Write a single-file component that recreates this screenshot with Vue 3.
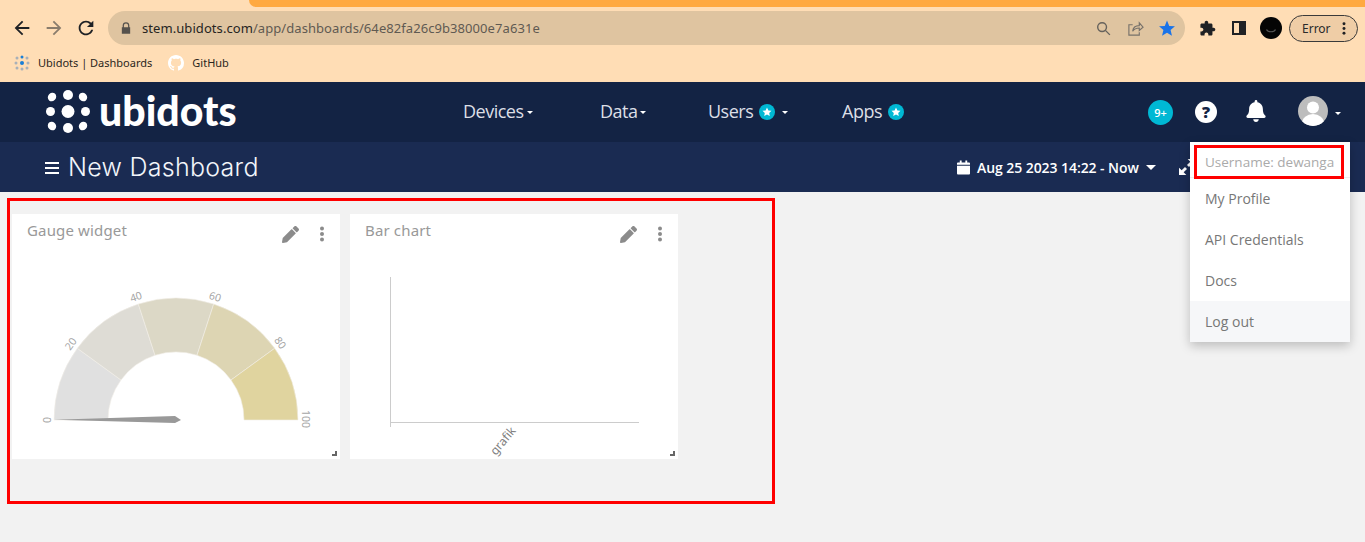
<script setup>
const sectors = [
  { d: 'M54 420A122 122 0 0 1 77.3 348.3L121 380A68 68 0 0 0 108 420Z', fill: '#e0e0e0' },
  { d: 'M77.3 348.3A122 122 0 0 1 138.3 304L155 355.3A68 68 0 0 0 121 380Z', fill: '#dedcd5' },
  { d: 'M138.3 304A122 122 0 0 1 213.7 304L197 355.3A68 68 0 0 0 155 355.3Z', fill: '#dcd8c6' },
  { d: 'M213.7 304A122 122 0 0 1 274.7 348.3L231 380A68 68 0 0 0 197 355.3Z', fill: '#ddd5b3' },
  { d: 'M274.7 348.3A122 122 0 0 1 298 420H244A68 68 0 0 0 231 380Z', fill: '#e0d49f' }
]
const labels = [
  { t: '0', x: 47, y: 420, r: -90 },
  { t: '20', x: 71, y: 344, r: -54 },
  { t: '40', x: 136, y: 297, r: -18 },
  { t: '60', x: 215, y: 297, r: 18 },
  { t: '80', x: 280, y: 343, r: 54 },
  { t: '100', x: 305, y: 419, r: 90 }
]
const menu = ['My Profile', 'API Credentials', 'Docs']
const pencil = 'M497.9 142.1l-46.1 46.1c-4.7 4.7-12.3 4.7-17 0l-111-111c-4.7-4.7-4.7-12.3 0-17l46.1-46.1c18.7-18.7 49.1-18.7 67.9 0l60.1 60.1c18.8 18.7 18.8 49.1 0 67.9zM284.2 99.8L21.6 362.4.4 483.9c-2.9 16.4 11.4 30.6 27.8 27.8l121.5-21.3 262.6-262.6c4.7-4.7 4.7-12.3 0-17l-111-111c-4.8-4.7-12.4-4.7-17.1 0z'
</script>

<template>
  <div class="page">
    <header class="browser">
      <div class="tabstrip"><div class="active-tab"></div></div>
      <div class="toolbar">
        <svg class="tb-icon" viewBox="0 0 24 24" fill="#1f2125"><path d="M20 11H7.83l5.59-5.59L12 4l-8 8 8 8 1.41-1.41L7.83 13H20v-2z"/></svg>
        <svg class="tb-icon fwd" viewBox="0 0 24 24" fill="#8a7c6c"><path d="M4 11h12.17l-5.59-5.59L12 4l8 8-8 8-1.41-1.41L16.17 13H4v-2z"/></svg>
        <svg class="tb-icon reload" viewBox="0 0 24 24" fill="#1f2125"><path d="M17.65 6.35C16.2 4.9 14.21 4 12 4c-4.42 0-7.99 3.58-7.99 8s3.57 8 7.99 8c3.73 0 6.84-2.55 7.73-6h-2.08c-.82 2.33-3.04 4-5.65 4-3.31 0-6-2.69-6-6s2.69-6 6-6c1.66 0 3.14.69 4.22 1.78L13 11h7V4l-2.35 2.35z"/></svg>
        <div class="omnibox">
          <svg class="lock" viewBox="0 0 12 14" fill="#55514c"><path d="M2 6V4a4 4 0 0 1 8 0v2h1v8H1V6Zm1.5 0h5V4a2.5 2.5 0 0 0-5 0Z"/></svg>
          <span class="url"><span class="host">stem.ubidots.com</span>/app/dashboards/64e82fa26c9b38000e7a631e</span>
          <svg class="omni-search" viewBox="0 0 16 16" fill="none" stroke="#66625c" stroke-width="1.5"><circle cx="6.5" cy="6.5" r="4.7"/><path d="M10 10l4.8 4.8"/></svg>
          <svg class="omni-share" viewBox="0 0 18 18" fill="none" stroke="#77716a" stroke-width="1.2"><path d="M6 5H2v11h11v-3"/><path d="M6 12c.4-4 3-6 7-6V3l4 4.5L13 11V8.5c-3 0-5.5 1-7 3.5Z"/></svg>
          <svg class="omni-star" viewBox="0 0 24 24" fill="#1a73e8"><path d="M12 2l3 7.2 7.6.6-5.8 5 1.8 7.4L12 18.300l-6.600 3.900 1.800-7.400-5.800-5 7.600-.6Z"/></svg>
        </div>
        <svg class="puzzle" viewBox="0 0 24 24" fill="#202124"><path d="M20.500 11H19V7c0-1.100-.9-2-2-2h-4V3.500C13 2.120 11.880 1 10.500 1S8 2.120 8 3.500V5H4c-1.100 0-1.990.9-1.990 2v3.800H3.500c1.490 0 2.700 1.210 2.700 2.700s-1.210 2.700-2.700 2.700H2V20c0 1.100.9 2 2 2h3.800v-1.500c0-1.490 1.210-2.700 2.700-2.700 1.490 0 2.700 1.210 2.700 2.700V22H17c1.100 0 2-.9 2-2v-4h1.500c1.380 0 2.500-1.120 2.500-2.500S21.880 11 20.500 11z"/></svg>
        <div class="sidepanel"><div class="sidepanel-fill"></div></div>
        <svg class="profile" viewBox="0 0 22 22"><circle cx="11" cy="11" r="11" fill="#050505"/><path d="M6.500 12.500c1.500 3 7.500 3 9 0" fill="none" stroke="#555" stroke-width="1.200"/></svg>
        <div class="error-pill">
          <span>Error</span>
          <svg class="pill-dots" viewBox="0 0 4 14" fill="#202124"><circle cx="2" cy="2" r="1.600"/><circle cx="2" cy="7" r="1.600"/><circle cx="2" cy="12" r="1.600"/></svg>
        </div>
      </div>
      <div class="bookmarks">
        <div class="bookmark">
          <svg class="bm-icon" viewBox="0 0 16 16">
            <circle cx="8" cy="8" r="2" fill="#1a7fd6"/><circle cx="8" cy="2" r="1.500" fill="#1a7fd6"/><circle cx="8" cy="14" r="1.500" fill="#a9b0b8"/><circle cx="2" cy="8" r="1.500" fill="#a9b0b8"/><circle cx="14" cy="8" r="1.500" fill="#a9b0b8"/><circle cx="3" cy="3" r="1.500" fill="#a9b0b8"/><circle cx="13" cy="3" r="1.500" fill="#a9b0b8"/><circle cx="3" cy="13" r="1.500" fill="#a9b0b8"/><circle cx="13" cy="13" r="1.500" fill="#a9b0b8"/>
          </svg>
          <span>Ubidots | Dashboards</span>
        </div>
        <div class="bookmark gh">
          <svg class="bm-icon" viewBox="0 0 16 16" fill="#fff"><path d="M8 0C3.580 0 0 3.580 0 8c0 3.540 2.290 6.530 5.470 7.590.4.070.55-.17.55-.38 0-.19-.01-.82-.01-1.490-2.010.37-2.530-.49-2.690-.94-.09-.23-.48-.94-.82-1.130-.28-.15-.68-.52-.01-.53.63-.01 1.080.58 1.230.82.72 1.210 1.870.87 2.330.66.07-.52.28-.87.51-1.070-1.780-.2-3.640-.89-3.640-3.950 0-.87.31-1.590.82-2.150-.08-.2-.36-1.020.08-2.120 0 0 .67-.21 2.200.82.64-.18 1.320-.27 2-.27.68 0 1.360.09 2 .27 1.530-1.040 2.200-.82 2.200-.82.44 1.100.16 1.920.08 2.120.51.56.82 1.270.82 2.150 0 3.070-1.870 3.750-3.650 3.950.29.25.54.73.54 1.480 0 1.070-.01 1.930-.01 2.200 0 .21.15.46.55.38A8.013 8.013 0 0016 8c0-4.420-3.580-8-8-8z"/></svg>
          <span>GitHub</span>
        </div>
      </div>
    </header>

    <nav class="topnav">
      <div class="logo">
        <svg class="logo-mark" viewBox="0 0 44 44" fill="#fff">
          <circle cx="22" cy="21.500" r="6.500"/><circle cx="22" cy="5" r="5"/><circle cx="22" cy="38" r="5"/>
          <circle cx="4.500" cy="21.500" r="4.500"/><circle cx="39.500" cy="21.500" r="4.500"/>
          <ellipse cx="6" cy="7" rx="4" ry="4.500" transform="rotate(40 6 7)"/><ellipse cx="37" cy="7" rx="4" ry="4.500" transform="rotate(-40 37 7)"/>
          <ellipse cx="6" cy="36" rx="4" ry="4.500" transform="rotate(-40 6 36)"/><ellipse cx="37" cy="36" rx="4" ry="4.500" transform="rotate(40 37 36)"/>
        </svg>
        <span class="logo-text">ubidots</span>
      </div>
      <div class="nav-links">
        <div class="nav-item devices">Devices<i class="caret"></i></div>
        <div class="nav-item data">Data<i class="caret"></i></div>
        <div class="nav-item users">Users
          <svg class="star-badge" viewBox="0 0 16 16"><circle cx="8" cy="8" r="8" fill="#00b8d4"/><path d="M8 3.500l1.400 2.900 3.100.4-2.300 2.100.6 3.100L8 10.500l-2.800 1.500.6-3.100-2.300-2.100 3.100-.4Z" fill="#fff"/></svg>
          <i class="caret wide"></i>
        </div>
        <div class="nav-item apps">Apps
          <svg class="star-badge" viewBox="0 0 16 16"><circle cx="8" cy="8" r="8" fill="#00b8d4"/><path d="M8 3.500l1.400 2.900 3.100.4-2.300 2.100.6 3.100L8 10.500l-2.800 1.500.6-3.100-2.300-2.100 3.100-.4Z" fill="#fff"/></svg>
        </div>
      </div>
      <div class="nav-right">
        <div class="count">9+</div>
        <div class="help">?</div>
        <svg class="bell" viewBox="0 0 448 512" fill="#fff"><path d="M224 512c35.320 0 63.970-28.650 63.970-64H160.030c0 35.350 28.650 64 63.970 64zm215.390-149.710c-19.320-20.760-55.470-51.990-55.470-154.290 0-77.700-54.480-139.900-127.940-155.160V32c0-17.670-14.320-32-31.980-32s-31.980 14.330-31.980 32v20.840C118.560 68.100 64.080 130.300 64.080 208c0 102.300-36.150 133.530-55.470 154.290-6 6.450-8.660 14.160-8.610 21.710.11 16.400 12.980 32 32.100 32h383.800c19.120 0 32-15.600 32.100-32 .05-7.550-2.610-15.270-8.610-21.710z"/></svg>
        <svg class="avatar" viewBox="0 0 30 30"><defs><clipPath id="av"><circle cx="15" cy="15" r="15"/></clipPath></defs><circle cx="15" cy="15" r="15" fill="#bdbdbd"/><g clip-path="url(#av)" fill="#fff"><circle cx="15" cy="11.500" r="6"/><ellipse cx="15" cy="27" rx="11" ry="9"/></g></svg>
        <i class="caret"></i>
      </div>
    </nav>

    <div class="subnav">
      <div class="sub-title">
        <div class="burger"><i></i><i></i><i></i></div>
        <h1>New Dashboard</h1>
      </div>
      <div class="sub-tools">
        <svg class="cal" viewBox="0 0 14 15" fill="#fff"><path d="M0 5.500h14V14a1 1 0 0 1-1 1H1a1 1 0 0 1-1-1ZM1 2h2V0h2v2h4V0h2v2h2a1 1 0 0 1 1 1v1.500H0V3a1 1 0 0 1 1-1Z"/></svg>
        <span class="range">Aug 25 2023 14:22 - Now</span>
        <i class="range-caret"></i>
        <svg class="expand" viewBox="0 0 12 12" fill="#fff"><path d="M0 12V6.500l2 2L4.500 6 6 7.500 3.500 10l2 2ZM12 0v5.500l-2-2L7.500 6 6 4.500 8.500 2l-2-2Z"/></svg>
      </div>
    </div>

    <main class="board">
      <section class="widget">
        <div class="widget-head">
          <span class="widget-title">Gauge widget</span>
          <svg class="pencil" viewBox="0 0 512 512" fill="#8b8b8b"><path :d="pencil"/></svg>
          <svg class="kebab" viewBox="0 0 4 16" fill="#8b8b8b"><circle cx="2" cy="2.500" r="2"/><circle cx="2" cy="8" r="2"/><circle cx="2" cy="13.500" r="2"/></svg>
        </div>
        <svg class="chart" viewBox="12 254 328 205">
          <path v-for="s in sectors" :key="s.fill" :d="s.d" :fill="s.fill" stroke="#f1efe8" stroke-width="0.600"/>
          <path d="M54 419.700L175 416 181 420 175 423Z" fill="#999"/>
          <text v-for="l in labels" :key="l.t" class="tick" text-anchor="middle" :transform="`translate(${l.x} ${l.y}) rotate(${l.r})`" dy="3.500">{{ l.t }}</text>
        </svg>
        <i class="resize"></i>
      </section>
      <section class="widget">
        <div class="widget-head">
          <span class="widget-title">Bar chart</span>
          <svg class="pencil" viewBox="0 0 512 512" fill="#8b8b8b"><path :d="pencil"/></svg>
          <svg class="kebab" viewBox="0 0 4 16" fill="#8b8b8b"><circle cx="2" cy="2.500" r="2"/><circle cx="2" cy="8" r="2"/><circle cx="2" cy="13.500" r="2"/></svg>
        </div>
        <svg class="chart" viewBox="350 254 328 205">
          <path d="M390.500 277V427M390 422.500H639" fill="none" stroke="#ccc" stroke-width="1"/>
          <text class="cat" text-anchor="middle" transform="translate(503 441) rotate(-50)" dy="4">grafik</text>
        </svg>
        <i class="resize"></i>
      </section>
    </main>

    <div class="dropdown">
      <div class="dd-user">Username: dewanga</div>
      <div v-for="m in menu" :key="m" class="dd-item">{{ m }}</div>
      <div class="dd-item logout">Log out</div>
    </div>
    <div class="mark mark-widgets"></div>
    <div class="mark mark-user"></div>
  </div>
</template>

<style>
html, body { margin: 0; padding: 0; background: #f2f2f2; }
</style>

<style scoped>
.page { position: relative; width: 1365px; height: 542px; overflow: hidden; background: #f2f2f2; font-family: "Open Sans", sans-serif; }

.browser { height: 82px; background: #ffddb5; display: flex; flex-direction: column; }
.tabstrip { height: 8px; padding-left: 249px; }
.active-tab { height: 7px; background: #ffa940; border-bottom-left-radius: 8px; }
.toolbar { height: 34px; margin-top: 3px; display: flex; align-items: center; padding-left: 11px; }
.tb-icon { width: 22px; height: 22px; flex: none; }
.fwd { margin-left: 10px; }
.reload { margin-left: 10px; }
.omnibox { width: 1077px; height: 34px; margin-left: 11px; flex: none; background: #dfc4a0; border-radius: 17px; display: flex; align-items: center; box-sizing: border-box; padding-left: 13px; }
.lock { width: 10px; height: 12px; flex: none; }
.url { margin-left: 11px; width: 880px; font: 13px "Noto Sans", sans-serif; color: #5f5a52; white-space: nowrap; letter-spacing: 0.07px; }
.host { color: #26241f; }
.omni-search { width: 15px; height: 15px; margin-left: 74px; flex: none; }
.omni-share { width: 17px; height: 17px; margin-left: 16px; flex: none; }
.omni-star { width: 18px; height: 18px; margin-left: 14px; flex: none; }
.puzzle { width: 17px; height: 17px; margin-left: 14px; flex: none; }
.sidepanel { width: 14px; height: 14px; margin-left: 16px; border: 2px solid #202124; box-sizing: border-box; display: flex; justify-content: flex-end; flex: none; background: #ffddb5; }
.sidepanel-fill { width: 5px; background: #202124; }
.profile { width: 22px; height: 22px; margin-left: 14px; flex: none; }
.error-pill { width: 69px; height: 27px; margin-left: 7px; box-sizing: border-box; border: 1px solid #3a3a3a; border-radius: 14px; background: #efcda6; display: flex; align-items: center; padding-left: 12px; font: 12px "Noto Sans", sans-serif; color: #2a2a2a; flex: none; }
.pill-dots { width: 4px; height: 13px; margin-left: 11px; }
.bookmarks { height: 35px; display: flex; align-items: center; padding-left: 14px; font: 11px "Noto Sans", sans-serif; color: #2b2620; }
.bookmark { display: flex; align-items: center; }
.bookmark span { margin-left: 8px; }
.bm-icon { width: 16px; height: 16px; flex: none; }
.gh { margin-left: 16px; }

.topnav { height: 60px; background: #132344; display: flex; align-items: center; color: #fff; }
.logo { width: 463px; display: flex; align-items: center; padding-left: 46px; box-sizing: border-box; flex: none; }
.logo-mark { width: 44px; height: 44px; flex: none; }
.logo-text { margin-left: 9px; font: 900 41px "Lato", sans-serif; line-height: 44px; color: #fff; letter-spacing: 0; margin-top: -3px; }
.nav-links { display: flex; align-items: center; flex: none; width: 685px; font-size: 18px; color: #dcdfe6; letter-spacing: -0.5px; margin-top: -2px; }
.nav-item { display: flex; align-items: center; white-space: pre; }
.devices { width: 137px; }
.data { width: 108px; }
.users { width: 134px; }
.star-badge { width: 16px; height: 16px; margin-left: 2px; margin-top: 2px; }
.caret { display: inline-block; width: 0; height: 0; border: 3.500px solid transparent; border-top-color: #fff; border-bottom: 0; margin-left: 3px; margin-top: 2px; }
.caret.wide { margin-left: 7px; }
.nav-right { display: flex; align-items: center; flex: none; }
.count { width: 25px; height: 25px; border-radius: 50%; background: #00b8d4; font-size: 11px; font-weight: 600; display: flex; align-items: center; justify-content: center; color: #fff; }
.help { width: 22px; height: 22px; margin-left: 22px; border-radius: 50%; background: #fff; color: #132344; font-weight: 800; font-size: 16px; line-height: 22px; text-align: center; }
.bell { width: 20px; height: 22px; margin-left: 29px; margin-top: -2px; }
.avatar { width: 30px; height: 30px; margin-left: 32px; margin-top: -2px; }
.nav-right .caret { margin-left: 7px; }

.subnav { height: 50px; background: #1a2b52; display: flex; align-items: center; color: #fff; }
.sub-title { width: 957px; padding-left: 45px; box-sizing: border-box; display: flex; align-items: center; flex: none; }
.burger { width: 14px; height: 12px; display: flex; flex-direction: column; justify-content: space-between; flex: none; margin-top: 2px; }
.burger i { display: block; height: 2px; background: #fff; }
h1 { margin: 0 0 0 9px; font: 300 25px "Inter", sans-serif; color: #f2f5fa; letter-spacing: 0.27px; white-space: nowrap; }
.sub-tools { display: flex; align-items: center; flex: none; }
.cal { width: 13px; height: 15px; flex: none; }
.range { margin-left: 7px; font-size: 14px; font-weight: 600; letter-spacing: -0.07px; white-space: nowrap; }
.range-caret { width: 0; height: 0; border: 5px solid transparent; border-top-color: #fff; border-bottom: 0; margin-left: 7px; }
.expand { width: 16px; height: 16px; margin-left: 23px; flex: none; }

.board { display: flex; gap: 10px; padding: 22px 0 0 12px; }
.widget { position: relative; width: 328px; height: 245px; background: #fff; }
.widget-head { height: 40px; display: flex; padding-left: 15px; position: relative; }
.widget-title { font: 15px "Noto Sans", sans-serif; color: #999; margin-top: 6px; width: 255px; letter-spacing: 0.15px; }
.pencil { width: 17px; height: 17px; margin-top: 12px; flex: none; }
.kebab { width: 4px; height: 16px; margin-top: 12px; margin-left: 21px; flex: none; }
.chart { display: block; width: 328px; height: 205px; }
.tick { font: 10.5px "Noto Sans", sans-serif; fill: #a5a5a5; }
.cat { font: 12px "Noto Sans", sans-serif; fill: #808080; }
.resize { position: absolute; right: 3px; bottom: 3px; width: 3px; height: 3px; border-right: 2px solid #666; border-bottom: 2px solid #666; }

.dropdown { position: absolute; left: 1190px; top: 142px; width: 160px; height: 200px; background: #fff; box-shadow: 0 4px 10px rgba(0,0,0,0.22); font-size: 14px; color: #777; }
.dd-user { height: 35px; line-height: 40px; padding-left: 15px; color: #aaa; border-bottom: 1px solid #eee; white-space: nowrap; font-size: 13.5px; }
.dd-item { height: 41px; line-height: 41px; padding-left: 15px; }
.logout { background: #f6f7f9; }

.mark { position: absolute; box-sizing: border-box; border: 3px solid #f00; pointer-events: none; }
.mark-widgets { left: 7px; top: 198px; width: 768px; height: 306px; }
.mark-user { left: 1194px; top: 145px; width: 150px; height: 34px; }
</style>
